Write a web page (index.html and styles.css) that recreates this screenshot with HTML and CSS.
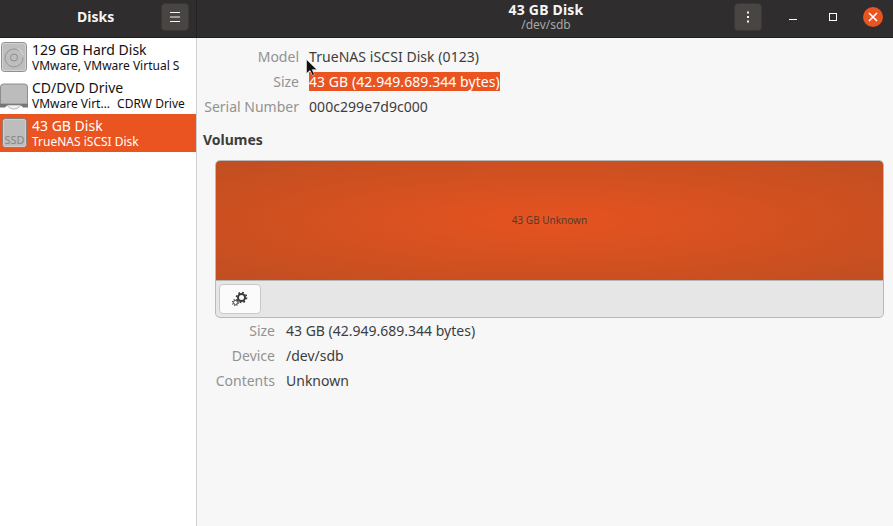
FILE: index.html
```html
<!DOCTYPE html>
<html lang="en">
<head>
<meta charset="utf-8">
<title>Disks</title>
<link rel="stylesheet" href="styles.css">
</head>
<body>
<div class="window">
  <header class="titlebar">
    <div class="title-left">
      <span class="app-title">Disks</span>
      <button class="head-btn menu-btn" aria-label="Menu">
        <svg width="16" height="16" viewBox="0 0 16 16"><path d="M3 3.500h10M3 8h10M3 12.500h10" stroke="#f5f5f5" stroke-width="1" fill="none"/></svg>
      </button>
    </div>
    <div class="title-right">
      <div class="title-center">
        <div class="title-main">43 GB Disk</div>
        <div class="title-sub">/dev/sdb</div>
      </div>
      <div class="win-controls">
        <button class="head-btn" aria-label="Drive options">
          <svg width="16" height="16" viewBox="0 0 16 16"><path d="M7 2.500h2v2H7zM7 7h2v2H7zM7 11.500h2v2H7z" fill="#f5f5f5"/></svg>
        </button>
        <svg class="wc wc-min" width="16" height="16" viewBox="0 0 16 16"><path d="M0 10.500h8" stroke="#fff" stroke-width="1"/></svg>
        <svg class="wc wc-max" width="16" height="16" viewBox="0 0 16 16"><rect x="4.500" y="4.500" width="7" height="7" fill="none" stroke="#fff" stroke-width="1"/></svg>
        <span class="close-btn">
          <svg width="20" height="20" viewBox="0 0 20 20"><path d="M6 6l8 8M14 6l-8 8" stroke="#fff" stroke-width="1.600" fill="none"/></svg>
        </span>
      </div>
    </div>
  </header>
  <div class="body">
    <aside class="sidebar">
      <div class="disk-row">
        <svg class="disk-icon" width="28" height="30" viewBox="0 0 28 30">
          <rect x="1.500" y="0.500" width="25" height="29" rx="3" fill="#bebebe" stroke="#8f8f8f"/>
          <rect x="2.500" y="1.500" width="23" height="27" rx="2" fill="none" stroke="#d2d2d2"/>
          <path d="M19 8.500A9 9 0 1 0 23 15.500" fill="none" stroke="#949494" stroke-width="1"/>
          <circle cx="14" cy="15.500" r="3.500" fill="none" stroke="#8c8c8c"/>
          <path d="M17 6.500A9.800 9.800 0 0 1 23.500 13" fill="none" stroke="#d8d8d8"/>
        </svg>
        <div class="disk-text">
          <div class="disk-name">129 GB Hard Disk</div>
          <div class="disk-desc">VMware, VMware Virtual S</div>
        </div>
      </div>
      <div class="disk-row">
        <svg class="disk-icon" width="28" height="30" viewBox="0 0 28 30">
          <path d="M.5 7a3 3 0 0 1 3-3h21a3 3 0 0 1 3 3v17H.5z" fill="#bcbcbc" stroke="#8d8d8d"/>
          <path d="M0 24h28v3.500h-5l-2-2H7l-2 2H0z" fill="#767676"/>
          <path d="M7 25h14c-1.500 2.500-4 4-7 4s-5.500-1.500-7-4z" fill="#f2f2f2" stroke="#8a8a8a" stroke-width=".6"/>
        </svg>
        <div class="disk-text">
          <div class="disk-name">CD/DVD Drive</div>
          <div class="disk-desc">VMware Virt<span class="ell">…</span> CDRW Drive</div>
        </div>
      </div>
      <div class="disk-row selected">
        <svg class="disk-icon" width="28" height="30" viewBox="0 0 28 30">
          <rect x="2.500" y="0.500" width="24" height="29" rx="3" fill="#bdbdbd" stroke="#8a7f78"/>
          <rect x="3.500" y="1.500" width="22" height="27" rx="2" fill="none" stroke="#cfcfcf"/>
          <text x="14.500" y="26" text-anchor="middle" class="ssd-label">SSD</text>
        </svg>
        <div class="disk-text">
          <div class="disk-name">43 GB Disk</div>
          <div class="disk-desc">TrueNAS iSCSI Disk</div>
        </div>
      </div>
    </aside>
    <main class="content">
      <dl class="props drive-props">
        <dt>Model</dt><dd>TrueNAS iSCSI Disk (0123)</dd>
        <dt>Size</dt><dd><span class="sel-text">43 GB (42.949.689.344 bytes)</span></dd>
        <dt>Serial Number</dt><dd>000c299e7d9c000</dd>
      </dl>
      <h2 class="section-title">Volumes</h2>
      <section class="volume-box">
        <div class="volume-bar">43 GB Unknown</div>
        <div class="volume-tools">
          <button class="gear-btn" aria-label="Additional partition options">
            <svg width="18" height="18" viewBox="0 0 18 18">
              <circle cx="10.500" cy="7.500" r="3.500" fill="none" stroke="#3a3a3a" stroke-width="2"/>
              <circle cx="10.500" cy="7.500" r="5" fill="none" stroke="#3a3a3a" stroke-width="1.600" stroke-dasharray="1.800 2.130"/>
              <circle cx="4.500" cy="12.500" r="2" fill="none" stroke="#4a4a4a" stroke-width="1"/>
              <circle cx="4.500" cy="12.500" r="3" fill="none" stroke="#4a4a4a" stroke-width="1.200" stroke-dasharray="1.200 1.150"/>
            </svg>
          </button>
        </div>
      </section>
      <dl class="props volume-props">
        <dt>Size</dt><dd>43 GB (42.949.689.344 bytes)</dd>
        <dt>Device</dt><dd>/dev/sdb</dd>
        <dt>Contents</dt><dd>Unknown</dd>
      </dl>
    </main>
  </div>
  <svg class="cursor" width="12" height="18" viewBox="0 0 12 18"><path d="M.5.500v14l3.500-3 2.500 5 2-1-2.300-4.800h4.800z" fill="#111" stroke="#eee" stroke-width=".6"/></svg>
</div>
</body>
</html>
```

FILE: styles.css
```css
* { box-sizing: border-box; }
html, body { margin: 0; padding: 0; }
body {
  width: 893px;
  height: 526px;
  overflow: hidden;
  font-family: "Noto Sans", "Open Sans", sans-serif;
  font-size: 14px;
  color: #3d3d3d;
  background: #f7f7f7;
}
.window { position: relative; width: 893px; height: 526px; display: flex; flex-direction: column; }
.titlebar {
  height: 38px;
  flex: none;
  display: flex;
  background: #2f2d2d;
  border-bottom: 1px solid #201f1f;
  color: #f5f5f5;
}
.title-left {
  width: 197px;
  flex: none;
  display: flex;
  align-items: center;
  padding: 0 0 4px 77px;
  border-right: 1px solid #242323;
}
.app-title { font-weight: 700; font-size: 14px; width: 84px; }
.menu-btn { margin-top: 1px; }
.head-btn {
  width: 28px;
  height: 28px;
  padding: 0;
  display: flex;
  align-items: center;
  justify-content: center;
  background: #484543;
  border: 1px solid #3a3837;
  border-radius: 4px;
}
.title-right { flex: 1; display: flex; align-items: center; position: relative; padding-bottom: 3px; }
.title-center { position: absolute; left: 2px; right: 0; top: 2px; text-align: center; line-height: 15px; }
.title-main { font-weight: 700; font-size: 14px; letter-spacing: .2px; }
.title-sub { font-size: 12px; line-height: 16px; color: #aaa8a7; }
.win-controls { margin-left: auto; display: flex; align-items: center; position: relative; }
.win-controls .head-btn { margin-right: 27px; }
.wc { flex: none; }
.wc-min { margin-right: 20px; }
.wc-max { margin-right: 22px; }
.close-btn {
  width: 20px;
  height: 20px;
  margin-right: 10px;
  border-radius: 50%;
  background: #e95420;
  display: block;
}
.close-btn svg { display: block; }
.body { flex: 1; display: flex; min-height: 0; }
.sidebar { width: 197px; flex: none; background: #fff; border-right: 1px solid #cfcfcf; }
.disk-row { height: 38px; display: flex; align-items: center; color: #111; }
.disk-row.selected { background: #e95420; color: #fff; }
.disk-icon { flex: none; width: 28px; height: 30px; margin-right: 4px; }
.ssd-label { font-size: 11px; fill: #868686; }
.disk-text { line-height: 15px; white-space: nowrap; }
.disk-name { font-size: 14px; line-height: 17px; }
.disk-desc { font-size: 12px; }
.ell { letter-spacing: 2px; margin-right: 2px; }
.content { flex: 1; padding: 6px 9px 0 6px; min-width: 0; }
.props { margin: 0; display: grid; grid-template-columns: 96px 1fr; column-gap: 10px; row-gap: 0; }
.props dt, .props dd { margin: 0; height: 25px; line-height: 25px; font-size: 14px; }
.props dt { text-align: right; color: #929292; }
.props dd { color: #3d3d3d; }
.drive-props dd { letter-spacing: .06px; }
.sel-text { background: #e95420; color: #fff; }
.section-title { margin: 11px 0 10px; font-size: 14px; line-height: 20px; font-weight: 700; color: #3d3d3d; }
.volume-box {
  margin-left: 12px;
  height: 158px;
  border: 1px solid #b9b9b9;
  border-radius: 5px;
  overflow: hidden;
  background: #e6e6e6;
}
.volume-bar {
  height: 120px;
  padding-bottom: 2px;
  display: flex;
  align-items: center;
  justify-content: center;
  font-size: 10px;
  color: #57392b;
  background: radial-gradient(ellipse farthest-corner at center, #e65320 0%, #c04e21 100%);
  border-bottom: 1px solid #b5b5b5;
}
.volume-tools { padding: 3px 3px; }
.gear-btn {
  width: 42px;
  height: 30px;
  padding: 0;
  display: flex;
  align-items: center;
  justify-content: center;
  background: #fbfbfb;
  border: 1px solid #c8c8c8;
  border-radius: 4px;
}
.volume-props { margin: 0 0 0 12px; grid-template-columns: 60px 1fr; column-gap: 11px; }
.cursor { position: absolute; left: 306px; top: 59px; }
```
